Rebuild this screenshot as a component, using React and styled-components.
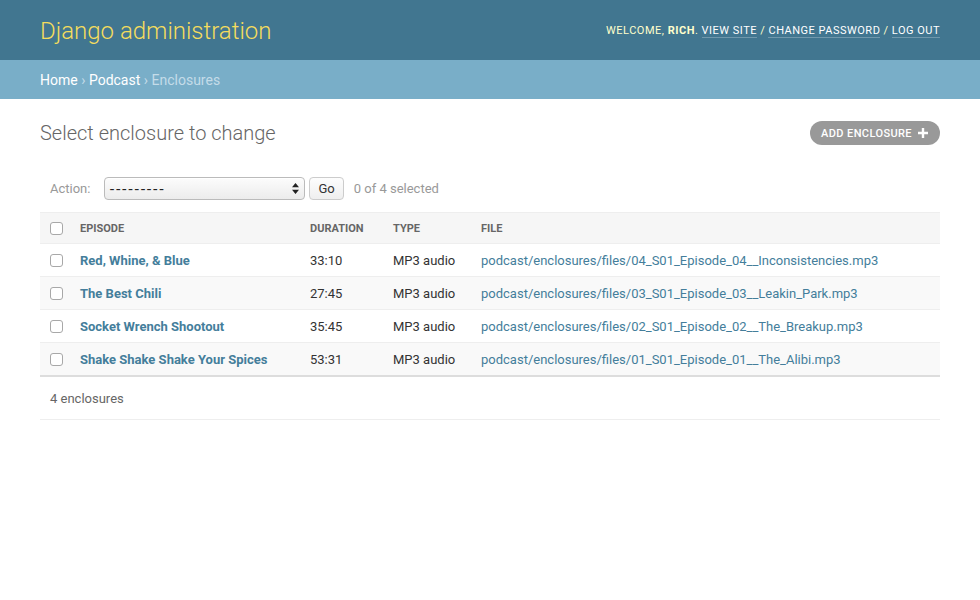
import React from "react";
import styled, { createGlobalStyle } from "styled-components";

const GlobalStyle = createGlobalStyle`
  html, body {
    margin: 0;
    padding: 0;
    background: #fff;
    font-family: Roboto, "Lucida Grande", Verdana, Arial, sans-serif;
    color: #333;
  }
`;

const Header = styled.div`
  height: 60px;
  padding: 0 40px;
  background: #417690;
  display: flex;
  align-items: center;
  justify-content: space-between;
  box-sizing: border-box;
`;

const Branding = styled.h1`
  margin: 0;
  padding-top: 2px;
  font-size: 24px;
  font-weight: 300;
  color: #f5dd5d;
`;

const UserTools = styled.div`
  font-size: 11px;
  letter-spacing: 0.5px;
  text-transform: uppercase;
  color: #ffc;
  & strong {
    font-weight: 700;
  }
`;

const ToolLink = styled.a`
  color: #fff;
  text-decoration: none;
  border-bottom: 1px solid rgba(255, 255, 255, 0.25);
`;

const Breadcrumbs = styled.div`
  height: 39px;
  padding: 0 40px;
  background: #79aec8;
  display: flex;
  align-items: center;
  font-size: 14px;
  color: #c4dce8;
`;

const Crumb = styled.a`
  color: #fff;
  text-decoration: none;
`;

const Sep = styled.span`
  margin: 0 3.5px;
  color: #c4dce8;
`;

const Content = styled.div`
  padding: 20px 40px;
`;

const TitleRow = styled.div`
  height: 28px;
  display: flex;
  align-items: center;
  justify-content: space-between;
  margin-bottom: 22px;
`;

const PageTitle = styled.h1`
  margin: 0;
  font-size: 20px;
  font-weight: 300;
  color: #666;
`;

const AddButton = styled.a`
  display: flex;
  align-items: center;
  gap: 6px;
  height: 24px;
  padding: 0 12px 0 11px;
  border-radius: 15px;
  background: #999;
  color: #fff;
  font-size: 11px;
  font-weight: 500;
  letter-spacing: 0.4px;
  text-transform: uppercase;
  text-decoration: none;
  box-sizing: border-box;
`;

const Actions = styled.div`
  display: flex;
  align-items: center;
  padding: 8px 10px;
  margin-bottom: 4px;
  font-size: 13px;
  color: #999;
`;

const ActionLabel = styled.label`
  margin-right: 14px;
`;

const SelectWrap = styled.div`
  position: relative;
  width: 201px;
  height: 23px;
  margin-right: 4px;
`;

const Select = styled.select`
  appearance: none;
  width: 100%;
  height: 100%;
  padding: 0 20px 0 4px;
  border: 1px solid #bbb;
  border-radius: 4px;
  background: linear-gradient(#fcfcfc, #ececec);
  box-shadow: inset 0 1px 0 #fff;
  font-family: "Liberation Sans", Arial, sans-serif;
  font-size: 15px;
  letter-spacing: 1.2px;
  color: #222;
  outline: none;
`;

const SelectArrows = styled.svg`
  position: absolute;
  right: 6px;
  top: 6px;
  pointer-events: none;
`;

const GoButton = styled.button`
  height: 23px;
  padding: 0 8px;
  border: 1px solid #ccc;
  border-radius: 4px;
  background: linear-gradient(#fdfdfd, #efefef);
  font-family: Roboto, sans-serif;
  font-size: 13px;
  color: #333;
  margin-right: 10px;
`;

const Table = styled.table`
  width: 100%;
  border-collapse: collapse;
  font-size: 13px;
  border-bottom: 2px solid #ddd;
`;

const HeadCell = styled.th`
  height: 31px;
  padding: 0 10px;
  width: ${(p) => p.w || "auto"};
  background: #f6f6f6;
  border-top: 1px solid #eee;
  border-bottom: 1px solid #eee;
  text-align: left;
  font-size: 11px;
  font-weight: 700;
  text-transform: uppercase;
  color: #666;
  box-sizing: border-box;
`;

const HeadCheckCell = styled(HeadCell)`
  width: 30px;
  padding-right: 0;
`;

const Row = styled.tr`
  background: ${(p) => (p.alt ? "#f9f9f9" : "#fff")};
`;

const Cell = styled.td`
  height: 32px;
  padding: 0 10px;
  border-bottom: 1px solid #eee;
  color: #333;
  vertical-align: middle;
`;

const CheckCell = styled(Cell)`
  width: 30px;
  padding-right: 0;
  box-sizing: border-box;
`;

const CheckBox = styled.input`
  appearance: none;
  display: block;
  width: 13px;
  height: 13px;
  margin: 0;
  border: 1px solid #a8a8a8;
  border-radius: 3px;
  background: #fff;
  box-sizing: border-box;
`;

const RowLink = styled.a`
  color: #447e9b;
  font-weight: ${(p) => (p.bold ? 700 : 400)};
  text-decoration: none;
`;

const Paginator = styled.p`
  margin: 0;
  height: 43px;
  line-height: 44px;
  padding: 0 10px;
  border-bottom: 1px solid #eee;
  font-size: 13px;
  color: #666;
  box-sizing: border-box;
`;

const rows = [
  ["Red, Whine, & Blue", "33:10", "podcast/enclosures/files/04_S01_Episode_04__Inconsistencies.mp3"],
  ["The Best Chili", "27:45", "podcast/enclosures/files/03_S01_Episode_03__Leakin_Park.mp3"],
  ["Socket Wrench Shootout", "35:45", "podcast/enclosures/files/02_S01_Episode_02__The_Breakup.mp3"],
  ["Shake Shake Shake Your Spices", "53:31", "podcast/enclosures/files/01_S01_Episode_01__The_Alibi.mp3"],
];

export default function App() {
  return (
    <>
      <GlobalStyle />
      <Header>
        <Branding>Django administration</Branding>
        <UserTools>
          Welcome, <strong>Rich</strong>. <ToolLink href="#">View site</ToolLink> /{" "}
          <ToolLink href="#">Change password</ToolLink> / <ToolLink href="#">Log out</ToolLink>
        </UserTools>
      </Header>
      <Breadcrumbs>
        <Crumb href="#">Home</Crumb>
        <Sep>›</Sep>
        <Crumb href="#">Podcast</Crumb>
        <Sep>›</Sep>
        Enclosures
      </Breadcrumbs>
      <Content>
        <TitleRow>
          <PageTitle>Select enclosure to change</PageTitle>
          <AddButton href="#">
            Add enclosure
            <svg width="10" height="10" viewBox="0 0 10 10">
              <path d="M3.8 0h2.4v3.8H10v2.4H6.2V10H3.8V6.2H0V3.8h3.8z" fill="#fff" />
            </svg>
          </AddButton>
        </TitleRow>
        <Actions>
          <ActionLabel>Action:</ActionLabel>
          <SelectWrap>
            <Select defaultValue="">
              <option value="">---------</option>
              <option value="delete">Delete selected enclosures</option>
            </Select>
            <SelectArrows width="7" height="11" viewBox="0 0 7 11">
              <path d="M3.5 0L7 4.2H0z M3.5 11L0 6.8h7z" fill="#222" />
            </SelectArrows>
          </SelectWrap>
          <GoButton>Go</GoButton>
          <span>0 of 4 selected</span>
        </Actions>
        <Table>
          <thead>
            <tr>
              <HeadCheckCell>
                <CheckBox type="checkbox" />
              </HeadCheckCell>
              <HeadCell w="230px">Episode</HeadCell>
              <HeadCell w="83px">Duration</HeadCell>
              <HeadCell w="88px">Type</HeadCell>
              <HeadCell>File</HeadCell>
            </tr>
          </thead>
          <tbody>
            {rows.map(([title, duration, file], i) => (
              <Row key={file} alt={i % 2 === 1}>
                <CheckCell>
                  <CheckBox type="checkbox" />
                </CheckCell>
                <Cell>
                  <RowLink href="#" bold>
                    {title}
                  </RowLink>
                </Cell>
                <Cell>{duration}</Cell>
                <Cell>MP3 audio</Cell>
                <Cell>
                  <RowLink href="#">{file}</RowLink>
                </Cell>
              </Row>
            ))}
          </tbody>
        </Table>
        <Paginator>4 enclosures</Paginator>
      </Content>
    </>
  );
}
